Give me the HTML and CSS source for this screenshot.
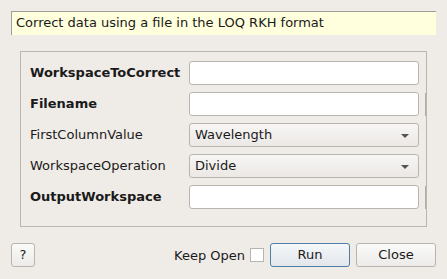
FILE: index.html
```html
<!DOCTYPE html>
<html>
<head>
<meta charset="utf-8">
<link rel="stylesheet" href="styles.css">
</head>
<body>
<div class="dialog">
  <div class="desc">Correct data using a file in the LOQ RKH format</div>
  <div class="group">
    <div class="label bold">WorkspaceToCorrect</div>
    <div class="field"></div>
    <div class="label bold">Filename</div>
    <div class="field"></div>
    <div class="stub"></div>
    <div class="label">FirstColumnValue</div>
    <div class="combo"><span>Wavelength</span><span class="arrow"></span></div>
    <div class="label">WorkspaceOperation</div>
    <div class="combo"><span>Divide</span><span class="arrow"></span></div>
    <div class="label bold">OutputWorkspace</div>
    <div class="field"></div>
    <div class="stub"></div>
  </div>
  <div class="buttons">
    <div class="btn help">?</div>
    <div class="spacer"></div>
    <span class="keep">Keep Open</span>
    <span class="check"></span>
    <div class="btn run">Run</div>
    <div class="btn close">Close</div>
  </div>
</div>
</body>
</html>
```
FILE: styles.css
```css
html, body {
  margin: 0;
  padding: 0;
}
body {
  background: #efebe7;
  font-family: "DejaVu Sans", sans-serif;
  font-size: 13px;
  color: #1a1a1a;
  width: 447px;
  height: 279px;
  overflow: hidden;
}
.dialog {
  display: flex;
  flex-direction: column;
}
.desc {
  margin: 11px 11px 0 11px;
  height: 24px;
  box-sizing: border-box;
  background: #ffffdd;
  border-top: 1px solid #a09e9a;
  border-left: 1px solid #a09e9a;
  padding-left: 4px;
  line-height: 22px;
  white-space: nowrap;
}
.group {
  margin: 16px 20px 0 20px;
  height: 176px;
  box-sizing: border-box;
  border: 1px solid #b9b5b1;
  padding: 9px 0 0 9px;
  display: grid;
  grid-template-columns: 159px 230px 6px 1px;
  grid-auto-rows: 24px;
  row-gap: 7px;
}
.label {
  grid-column: 1;
  line-height: 24px;
  white-space: nowrap;
}
.bold {
  font-weight: bold;
}
.field {
  grid-column: 2;
  background: #ffffff;
  border: 1px solid #b8b4b0;
  border-radius: 3px;
  box-sizing: border-box;
}
.stub {
  grid-column: 4;
  background: #b0aca8;
  margin: 1px 0 0 0;
}
.combo {
  grid-column: 2;
  border: 1px solid #b8b4b0;
  border-radius: 3px;
  box-sizing: border-box;
  background: linear-gradient(#f7f6f5, #ebe8e5);
  display: flex;
  align-items: center;
  justify-content: space-between;
  padding: 0 9px 0 5px;
  line-height: 22px;
}
.arrow {
  width: 0;
  height: 0;
  border-left: 4px solid transparent;
  border-right: 4px solid transparent;
  border-top: 4px solid #555250;
  margin-top: 1px;
}
.buttons {
  margin-top: 16px;
  padding: 0 11px;
  display: flex;
  align-items: center;
  height: 24px;
}
.spacer {
  flex: 1;
}
.btn {
  height: 24px;
  box-sizing: border-box;
  border: 1px solid #b8b4b0;
  border-radius: 3px;
  background: linear-gradient(#fafaf9, #ecebe9);
  text-align: center;
  line-height: 22px;
}
.help {
  width: 24px;
}
.keep {
  margin-right: 5px;
}
.check {
  width: 14px;
  height: 14px;
  box-sizing: border-box;
  border: 1px solid #b8b4b0;
  background: #ffffff;
  margin-right: 6px;
}
.run {
  width: 80px;
  border-color: #4f7fa6;
  background: linear-gradient(#f5f7f9, #e2e7ec);
}
.close {
  width: 80px;
  margin-left: 6px;
}
```
